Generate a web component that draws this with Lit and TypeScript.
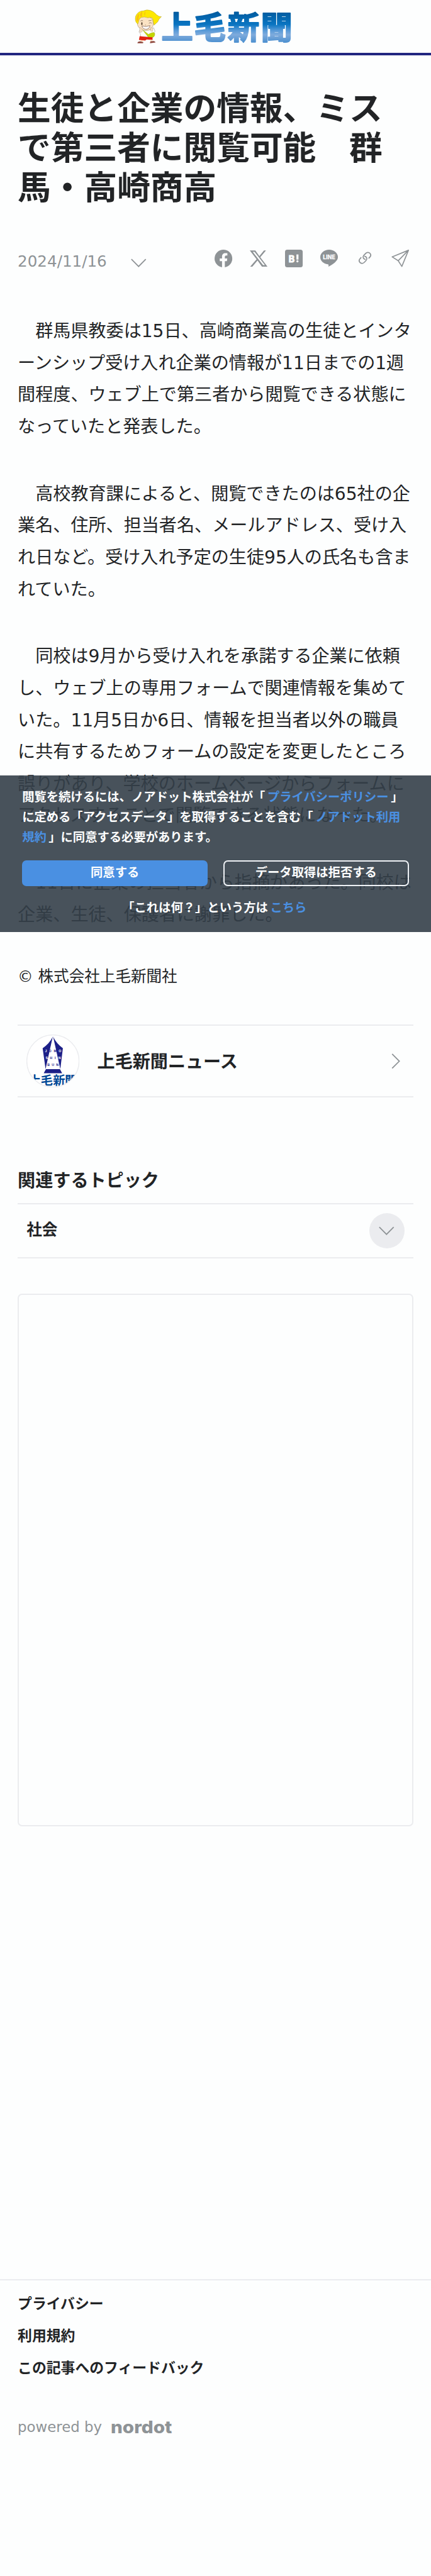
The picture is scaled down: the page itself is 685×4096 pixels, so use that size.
import { LitElement, html, css, svg } from 'lit';
import { customElement, property } from 'lit/decorators.js';

@customElement('jomo-logo')
export class JomoLogo extends LitElement {
  static styles = css`
  :host {
    display: block;
    width: 144px;
    height: 30px;
  }

  svg {
    display: block;
    width: 100%;
    height: 100%;
    overflow: visible;
  }

  .name {
    font-family: "Noto Sans CJK JP", sans-serif;
    font-weight: bold;
    font-size: 86px;
  }
`;

  render() {
    return html`
      <svg viewBox="0 0 432 90">
        <defs>
          <linearGradient id="sky" gradientUnits="userSpaceOnUse" x1="0" y1="4" x2="0" y2="88">
            <stop offset="0" stop-color="#005a9e" />
            <stop offset="0.42" stop-color="#0a75c2" />
            <stop offset="0.62" stop-color="#5a9bd8" />
            <stop offset="0.75" stop-color="#7fabdc" />
            <stop offset="1" stop-color="#4c90d0" />
          </linearGradient>
        </defs>
        <!-- mascot -->
        <path d="M15 60 L19 49 L27 54 L45 54 L55 48 L59 58 L53 63 L50 73 L20 73 L19 64Z" fill="#fff" stroke="#a79a90" stroke-width="1" />
        <path d="M11 40 Q9 18 32 16 Q55 18 54 38 Q53 54 34 56 Q15 54 11 40Z" fill="#fbe3c4" stroke="#a08a70" stroke-width="1" />
        <path d="M12 38 Q3 32 6 17 Q12 2 28 2 Q36 -2 46 1 Q56 4 63 13 Q70 19 76 18 Q68 25 66 32 L56 41 L52 23 Q48 18 39 21 Q30 17 21 20 Q15 23 14 32Z" fill="#fde800" stroke="#b8a233" stroke-width="1" />
        <path d="M9 31 Q7 15 16 10 L13 30Z M19 18 Q16 10 24 4 L23 18Z M31 16 Q27 10 33 3" fill="#f8bd17" />
        <ellipse cx="23" cy="37" rx="1.8" ry="4" fill="#544332" />
        <path d="M42 36 Q46 32 50 36 M19 30 Q22 27 26 29 M41 29 L49 28 M32 40 L34 41" fill="none" stroke="#6f5b49" stroke-width="1.2" />
        <path d="M23 43 Q34 47 45 42 Q43 53 33 52 Q25 51 23 43Z" fill="#fff" stroke="#8b6b5c" stroke-width="1.4" />
        <path d="M17 47 L23 50 L24 59 L18 61Z M47 47 L53 50 L52 58 L47 57Z" fill="#fbe3c4" stroke="#b39b84" stroke-width="0.8" />
        <path d="M25 54 L41 66 Q54 58 58 63 Q59 74 49 75 Q41 76 37 69 Z" fill="#c4d600" stroke="#9bad14" stroke-width="0.8" />
        <path d="M17 71 L36 73 L52 74 L52 81 L36 80 L32 83 L15 81Z" fill="#e32213" />
        <path d="M20 82 L26 82 L26 86 L20 86Z M45 81 L50 81 L51 86 L46 86Z" fill="#fbe3c4" />
        <path d="M11 90 Q11 85 19 85 L27 87 L26 90Z M45 90 L46 85 L54 84 Q60 85 60 88Z" fill="#8d463b" />
        <text class="name" x="76 165 256 346" y="79" fill="url(#sky)" stroke="url(#sky)" stroke-width="3.5" stroke-linejoin="round">上毛新聞</text>
      </svg>
    `;
  }
}

@customElement('share-icons')
export class ShareIcons extends LitElement {
  static styles = css`
  :host {
    display: flex;
    gap: 16px;
    color: #8e9396;
  }

  svg {
    display: block;
    width: 16px;
    height: 16px;
    overflow: visible;
  }

  .hatena {
    font: bold 24px Inter, sans-serif;
  }

  .line {
    font: bold 14.5px Inter, sans-serif;
  }
`;

  // every icon is drawn on a 48 x 48 grid
  icons = [
    svg`<path fill="currentColor" d="M24 0a24 24 0 0 0-3.7 47.7V31h-6.2v-7h6.2v-5.4c0-6.1 3.6-9.4 9.2-9.4 2.6 0 5.3.4 5.3.4v6h-3c-3 0-3.9 1.9-3.9 3.8V24h6.6l-1 7h-5.6v16.7A24 24 0 0 0 24 0z" />`,
    svg`<path fill="currentColor" fill-rule="evenodd" d="M0 2h15l11 15.4L38.500 2H44L28.500 20.500 48 46H33L21 29.600 7 46H1L18.500 26.200zM8 6l28 36h5L13 6z" />`,
    svg`<rect width="48" height="48" rx="6" fill="currentColor" />
      <text class="hatena" x="10" y="34" textLength="16" lengthAdjust="spacingAndGlyphs" fill="#fdfefe" stroke="#fdfefe" stroke-width="1.6">B</text>
      <path fill="#fdfefe" d="M31 13h5.500v14H31z" /><circle cx="33.700" cy="31.500" r="2.900" fill="#fdfefe" />`,
    svg`<path fill="currentColor" d="M24 0C10.700 0 0 8.900 0 20c0 10 8.700 18.200 20.500 19.700 2.500.5 2.400 1.600 1.700 6.300C33 41 48 31 48 20 48 8.900 37.300 0 24 0z" />
      <text class="line" x="7.500" y="25.800" textLength="33" lengthAdjust="spacingAndGlyphs" fill="#fdfefe" stroke="#fdfefe" stroke-width="0.5">LINE</text>`,
    svg`<g fill="none" stroke="currentColor" stroke-width="3">
      <path d="M25.500 26.300C19 26 17.300 19.500 20.800 15.500L26 10C29.500 6.500 34.500 6.500 37.500 9.800C40.500 13 40 17 37.500 19.800L34 23.800" />
      <path d="M22.500 18.300C29 18.600 30.700 25.100 27.200 29.100L22 34.600C18.500 38.100 13.500 38.100 10.500 34.800C7.500 31.600 8 27.600 10.500 24.800L14 20.800" /></g>`,
    svg`<path fill="none" stroke="currentColor" stroke-width="2.800" stroke-linejoin="round" d="M46.500 1.500L2 19.500L18.500 30L28.500 45.500zM18.500 30L46 2" />`,
  ];

  render() {
    return this.icons.map((icon) => html`<svg viewBox="0 0 48 48">${icon}</svg>`);
  }
}

@customElement('consent-banner')
export class ConsentBanner extends LitElement {
  static styles = css`
  :host {
    display: block;
    box-sizing: border-box;
    padding: 11px 20px 0;
    background-color: rgba(52, 63, 73, 0.9);
    color: #fdfefe;
    font-weight: bold;
    font-size: 11px;
    line-height: 18px;
  }

  p {
    margin: 0;
  }

  a {
    color: #4a90e2;
    margin: 0 2px;
  }

  .buttons {
    display: grid;
    grid-template-columns: 1fr 1fr;
    gap: 14px;
    margin: 12px 0 11px;
  }

  .button {
    box-sizing: border-box;
    height: 23px;
    border: 1.2px solid #eef1f5;
    border-radius: 4px;
    text-align: center;
    line-height: 20.6px;
  }

  .agree {
    background-color: #4a90e2;
    border-color: #4a90e2;
  }

  .about {
    text-align: center;
  }
`;

  render() {
    return html`
      <p>閲覧を続けるには、ノアドット株式会社が「<a>プライバシーポリシー</a>」に定める「アクセスデータ」を取得することを含む「<a>ノアドット利用規約</a>」に同意する必要があります。</p>
      <div class="buttons">
        <div class="button agree">同意する</div>
        <div class="button">データ取得は拒否する</div>
      </div>
      <p class="about">「これは何？」という方は<a>こちら</a></p>
    `;
  }
}

@customElement('app-root')
export class ArticlePage extends LitElement {
  /* sizes below are for a 390px wide phone, zoomed to the window */
  static styles = css`
  :host {
    display: block;
    position: relative;
    box-sizing: border-box;
    zoom: 1.75641;
    width: 390px;
    height: 2332px;
    overflow: hidden;
    background-color: #fdfefe;
    color: #222426;
    font-family: "DejaVu Sans", "Noto Sans CJK JP", sans-serif;
    font-size: 16px;
  }

  .header {
    display: flex;
    justify-content: center;
    box-sizing: border-box;
    height: 50px;
    padding: 9px 5px 0 0;
    border-bottom: 2.3px solid #222680;
  }

  .article {
    padding: 0 16px;
  }

  h1 {
    margin: 30px 0 0;
    font-size: 30px;
    line-height: 36px;
  }

  .meta {
    display: flex;
    height: 22px;
    margin-top: 38px;
    color: #8e9396;
    font-size: 14px;
  }

  .date {
    line-height: 22px;
  }

  .arrow {
    display: block;
    fill: none;
    stroke: #8e9396;
    stroke-width: 1;
  }

  .meta .arrow {
    margin: 8px 0 0 22px;
  }

  .meta share-icons {
    margin: 0 4px 0 auto;
  }

  .body {
    margin-top: 38px;
    line-height: 28.8px;
  }

  .body p {
    margin: 0 0 32px;
  }

  .copyright {
    margin-top: -0.7px;
    font-size: 14px;
    line-height: 20px;
  }

  .media {
    display: flex;
    align-items: center;
    box-sizing: border-box;
    height: 66px;
    margin-top: 33.5px;
    padding: 0 12px 0 8px;
    border-top: 1.2px solid #ebecef;
    border-bottom: 1.2px solid #ebecef;
    font-weight: bold;
  }

  .avatar {
    display: block;
    width: 48px;
    height: 48px;
    margin-right: 16px;
  }

  .avatar .latin {
    font: bold 9px "Liberation Sans", sans-serif;
  }

  .avatar .kanji {
    font: bold 33px "Noto Sans CJK JP", sans-serif;
  }

  .media-name {
    flex: 1;
    padding-bottom: 2px;
  }

  h2 {
    margin: 64px 0 0;
    font-size: 16px;
    line-height: 24px;
  }

  .topic {
    display: flex;
    align-items: center;
    justify-content: space-between;
    box-sizing: border-box;
    height: 50px;
    margin-top: 7.8px;
    padding: 0 8px;
    border-top: 1.2px solid #ebecef;
    border-bottom: 1.2px solid #ebecef;
    font-size: 14px;
    font-weight: bold;
  }

  .topic-name {
    padding-bottom: 5px;
  }

  .toggle {
    display: flex;
    align-items: center;
    justify-content: center;
    width: 32px;
    height: 32px;
    border-radius: 50%;
    background-color: #ebecef;
  }

  .slot {
    box-sizing: border-box;
    height: 482px;
    margin-top: 32px;
    border: 1.2px solid #ebecef;
    border-radius: 4px;
  }

  .footer {
    margin-top: 410px;
    padding: 7px 16px 0;
    border-top: 1.2px solid #ebecef;
    font-size: 13px;
    line-height: 29px;
  }

  .footer a {
    display: block;
    font-weight: bold;
  }

  .powered {
    display: flex;
    align-items: center;
    gap: 8px;
    margin-top: 24.5px;
    color: #8e9396;
  }

  .nordot {
    display: block;
    width: 55.5px;
    height: 14px;
    overflow: visible;
    fill: #8e9396;
    font: 800 15.5px Inter, sans-serif;
  }

  consent-banner {
    position: absolute;
    left: 0;
    top: 702px;
    width: 390px;
    height: 142px;
  }
`;

  @property({ type: Array }) paragraphs: string[] = [
    '　群馬県教委は15日、高崎商業高の生徒とインターンシップ受け入れ企業の情報が11日までの1週間程度、ウェブ上で第三者から閲覧できる状態になっていたと発表した。',
    '　高校教育課によると、閲覧できたのは65社の企業名、住所、担当者名、メールアドレス、受け入れ日など。受け入れ予定の生徒95人の氏名も含まれていた。',
    '　同校は9月から受け入れを承諾する企業に依頼し、ウェブ上の専用フォームで関連情報を集めていた。11月5日か6日、情報を担当者以外の職員に共有するためフォームの設定を変更したところ誤りがあり、学校のホームページからフォームにアクセスすることで閲覧できる状態になった。',
    '　11日に企業の担当者から指摘があった。同校は企業、生徒、保護者に謝罪した。',
  ];

  @property({ type: Array }) links: string[] = ['プライバシー', '利用規約', 'この記事へのフィードバック'];

  renderDown() {
    return html`<svg class="arrow" width="14" height="8" viewBox="0 0 14 8"><path d="M0.500 0.700L7 7.200L13.500 0.700" /></svg>`;
  }

  renderAvatar() {
    return html`
      <svg class="avatar" viewBox="0 0 144 144">
        <defs><clipPath id="round"><circle cx="72" cy="72" r="70" /></clipPath></defs>
        <circle cx="72" cy="72" r="71" fill="#fff" stroke="#ebecef" stroke-width="2.500" />
        <g clip-path="url(#round)">
          <path fill="#1d2088" d="M72 5L71 8 52 94 44 37Q62 25 72 5zM72 5L73 8 92 94 99 37Q82 25 72 5zM53 94h38l6 11H47z" />
          <path fill="#fff" d="M72 8L91 93H53z" />
          <g class="latin" text-anchor="middle">
            <text x="53 64 78 91" y="48" fill="#1d2088"><tspan fill="#fff">J</tspan><tspan>OM</tspan><tspan fill="#fff">O</tspan></text>
            <text x="55 67 78 90" y="66.500" fill="#1d2088"><tspan fill="#fff">S</tspan>HI<tspan fill="#fff">N</tspan></text>
            <text x="60 72 84" y="85" fill="#1d2088">BUN</text>
          </g>
          <text class="kanji" x="7 39 72 104" y="136" fill="#004896">上毛新聞</text>
        </g>
      </svg>
    `;
  }

  render() {
    return html`
      <div class="header"><jomo-logo></jomo-logo></div>
      <div class="article">
        <h1>生徒と企業の情報、ミスで第三者に閲覧可能　群馬・高崎商高</h1>
        <div class="meta">
          <span class="date">2024/11/16</span>
          ${this.renderDown()}
          <share-icons></share-icons>
        </div>
        <div class="body">
          ${this.paragraphs.map((text) => html`<p>${text}</p>`)}
        </div>
        <div class="copyright">© 株式会社上毛新聞社</div>
        <div class="media">
          ${this.renderAvatar()}
          <span class="media-name">上毛新聞ニュース</span>
          <svg class="arrow" width="8" height="14" viewBox="0 0 8 14"><path d="M0.700 0.500L7.200 7L0.700 13.500" /></svg>
        </div>
        <h2>関連するトピック</h2>
        <div class="topic">
          <span class="topic-name">社会</span>
          <span class="toggle">${this.renderDown()}</span>
        </div>
        <div class="slot"></div>
      </div>
      <div class="footer">
        ${this.links.map((link) => html`<a>${link}</a>`)}
        <div class="powered">
          <span>powered by</span>
          <svg class="nordot" viewBox="0 0 55.5 14"><text x="0" y="12.500" textLength="55.5" lengthAdjust="spacingAndGlyphs">nordot</text></svg>
        </div>
      </div>
      <consent-banner></consent-banner>
    `;
  }
}
